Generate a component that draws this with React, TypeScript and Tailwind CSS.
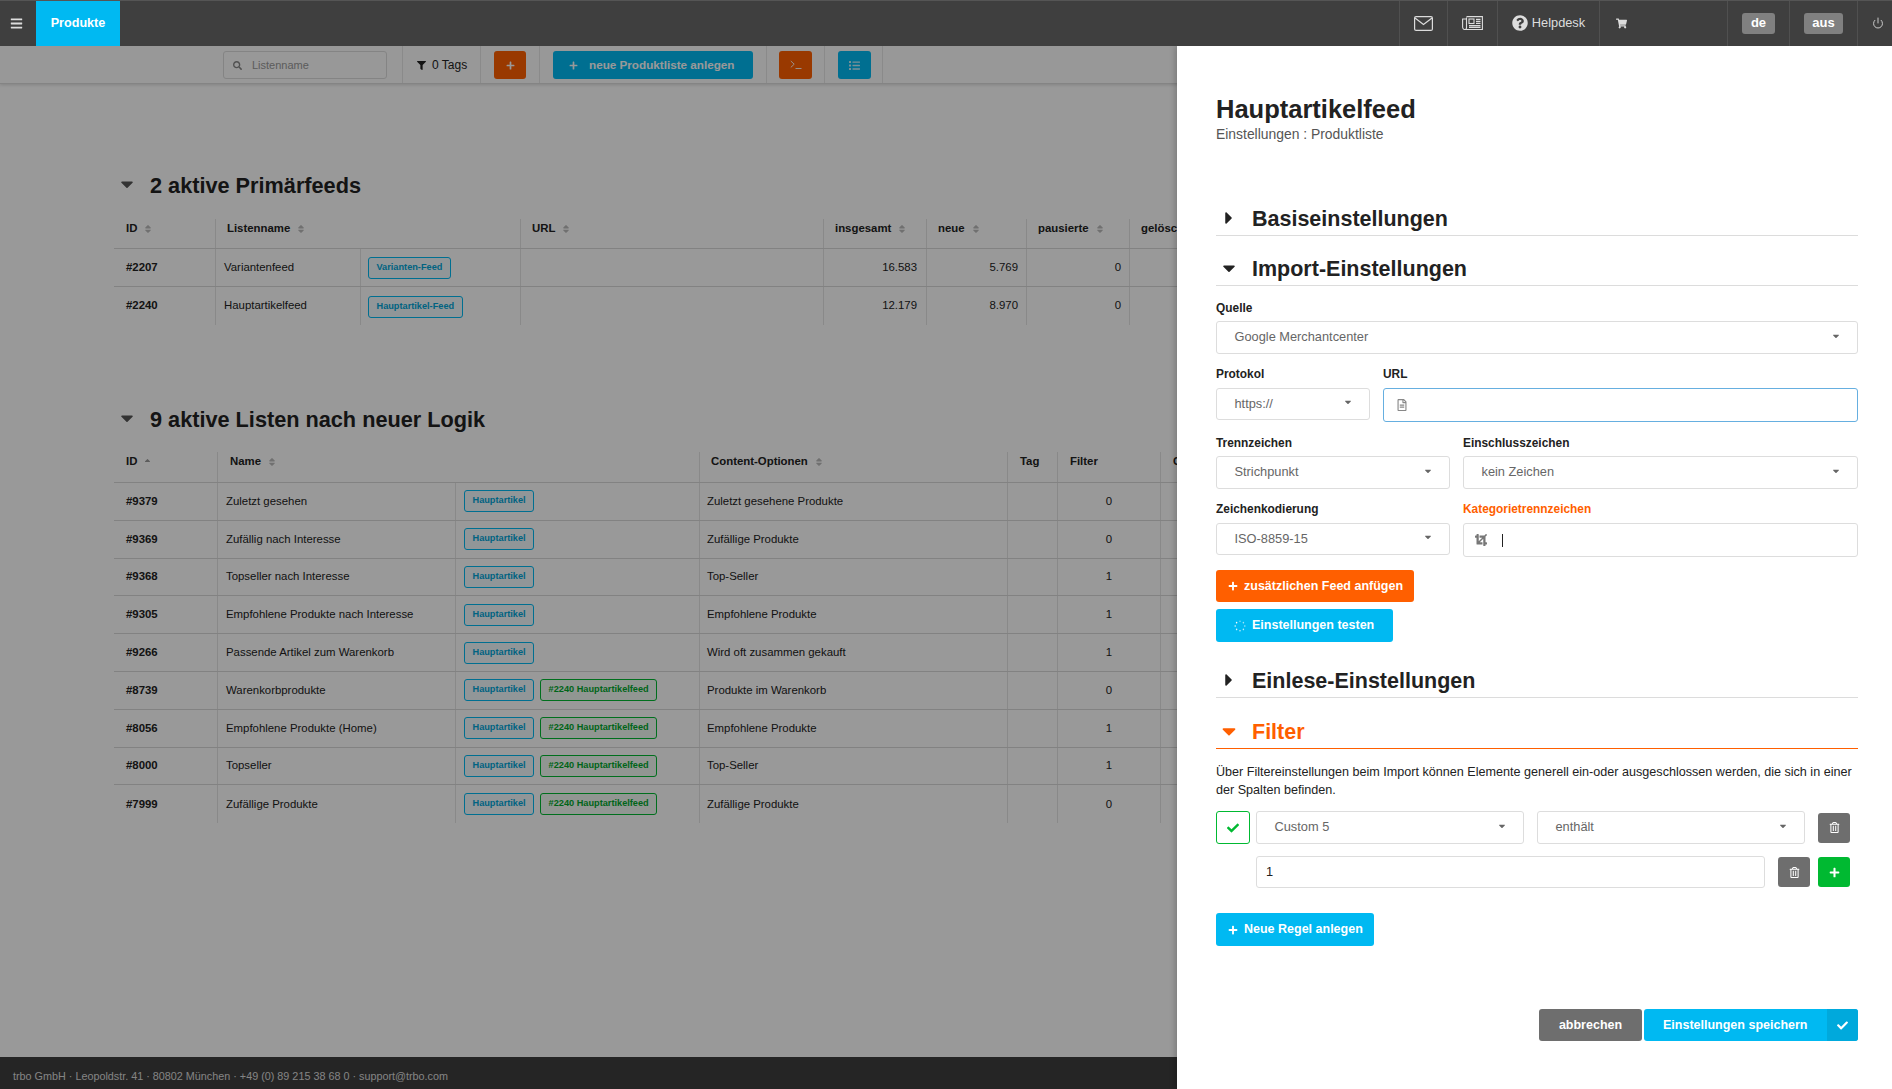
import type { ReactNode } from "react";
import {
  FaBars,
  FaCaretDown,
  FaCaretRight,
  FaCheck,
  FaCrop,
  FaFilter,
  FaList,
  FaPlus,
  FaQuestionCircle,
  FaRegFileAlt,
  FaRegTrashAlt,
  FaSearch,
  FaShoppingCart,
  FaSort,
  FaSortUp,
} from "react-icons/fa";
import { Power } from "lucide-react";

const primaryRows = [
  { id: "#2207", name: "Variantenfeed", badge: "Varianten-Feed", total: "16.583", fresh: "5.769", paused: "0" },
  { id: "#2240", name: "Hauptartikelfeed", badge: "Hauptartikel-Feed", total: "12.179", fresh: "8.970", paused: "0" },
];

const listRows = [
  { id: "#9379", name: "Zuletzt gesehen", feed: false, content: "Zuletzt gesehene Produkte", filter: "0" },
  { id: "#9369", name: "Zufällig nach Interesse", feed: false, content: "Zufällige Produkte", filter: "0" },
  { id: "#9368", name: "Topseller nach Interesse", feed: false, content: "Top-Seller", filter: "1" },
  { id: "#9305", name: "Empfohlene Produkte nach Interesse", feed: false, content: "Empfohlene Produkte", filter: "1" },
  { id: "#9266", name: "Passende Artikel zum Warenkorb", feed: false, content: "Wird oft zusammen gekauft", filter: "1" },
  { id: "#8739", name: "Warenkorbprodukte", feed: true, content: "Produkte im Warenkorb", filter: "0" },
  { id: "#8056", name: "Empfohlene Produkte (Home)", feed: true, content: "Empfohlene Produkte", filter: "1" },
  { id: "#8000", name: "Topseller", feed: true, content: "Top-Seller", filter: "1" },
  { id: "#7999", name: "Zufällige Produkte", feed: true, content: "Zufällige Produkte", filter: "0" },
];

function Badge({ children, green, className = "" }: { children: ReactNode; green?: boolean; className?: string }) {
  return (
    <span
      className={`flex h-[22px] items-center rounded-[3px] border-[1.5px] px-[7.5px] text-[9.2px] font-bold whitespace-nowrap ${
        green ? "border-[#00b931] bg-[#f2fbf4] text-[#00a82c]" : "border-[#00b9f2] bg-[#f2fbfe] text-[#00a5d8]"
      } ${className}`}
    >
      {children}
    </span>
  );
}

function HeadCell({ children, sort = true, up, className = "pl-3" }: { children: ReactNode; sort?: boolean; up?: boolean; className?: string }) {
  return (
    <div className={`flex items-center gap-[6px] border-l border-[#e4e4e4] pb-[10px] text-[11.4px] font-bold text-[#222] first:border-l-0 ${className}`}>
      {children}
      {sort && (up ? <FaSortUp className="text-[9px] text-[#999]" /> : <FaSort className="text-[10px] text-[#bbb]" />)}
    </div>
  );
}

function Cell({ children, className = "" }: { children?: ReactNode; className?: string }) {
  return <div className={`flex items-center border-l border-[#e4e4e4] text-[11.4px] text-[#222] ${className}`}>{children}</div>;
}

function SectionTitle({ children }: { children: ReactNode }) {
  return (
    <h2 className="flex h-[28px] items-center pl-[119px] text-[21.7px] font-bold text-[#222]">
      <FaCaretDown className="mr-[15px] mb-[4px] w-[16px] text-[20px] text-[#555]" />
      {children}
    </h2>
  );
}

function PanelHeading({ children, open, active, className = "" }: { children: ReactNode; open?: boolean; active?: boolean; className?: string }) {
  const Caret = open ? FaCaretDown : FaCaretRight;
  return (
    <div
      className={`flex h-[33px] items-center border-b text-[21.5px] font-bold ${
        active ? "border-[#ff5f00] text-[#ff5f00]" : "border-[#dcdcdc] text-[#222]"
      } ${className}`}
    >
      <span className="flex w-[36px] justify-center pr-[10px] pb-[2px]">
        <Caret className={active ? "text-[22px]" : "text-[20px]"} />
      </span>
      {children}
    </div>
  );
}

function Select({ value, className = "" }: { value: string; className?: string }) {
  return (
    <div className={`flex items-center justify-between rounded-[3px] border border-[#ddd] bg-white pr-[16px] pb-px pl-[17.5px] text-[12.8px] text-[#666] ${className}`}>
      {value}
      <FaCaretDown className="mb-[3px] text-[10px] text-[#666]" />
    </div>
  );
}

function Label({ children, orange }: { children: ReactNode; orange?: boolean }) {
  return <div className={`h-4 text-[11.9px] leading-4 font-bold ${orange ? "text-[#ff5f00]" : "text-[#222]"}`}>{children}</div>;
}

function HeaderCell({ children, className = "" }: { children: ReactNode; className?: string }) {
  return <div className={`flex h-full items-center justify-center border-l border-[#505050] pb-px ${className}`}>{children}</div>;
}

function ToolCell({ children, className = "" }: { children: ReactNode; className?: string }) {
  return <div className={`flex h-full items-center border-l border-[#e6e6e6] pt-px ${className}`}>{children}</div>;
}

function IconBtn({ children, color }: { children: ReactNode; color: string }) {
  return <button className={`flex h-[30px] w-[32px] items-center justify-center rounded-[3px] text-[11px] text-white ${color}`}>{children}</button>;
}

function ActionBtn({ children, color, className = "" }: { children: ReactNode; color: string; className?: string }) {
  return (
    <button className={`flex items-center rounded-[3px] pl-[12px] text-[12.5px] font-bold whitespace-nowrap text-white ${color} ${className}`}>
      {children}
    </button>
  );
}

function Spinner() {
  const dots = [0, 45, 90, 135, 180, 225, 270, 315];
  return (
    <svg viewBox="0 0 16 16" className="mr-[6px] h-[12px] w-[12px]">
      {dots.map((deg, i) => (
        <circle key={deg} cx="8" cy="1.6" r="1" fill="white" opacity={0.55 + i * 0.06} transform={`rotate(${deg} 8 8)`} />
      ))}
    </svg>
  );
}

function MailIcon() {
  return (
    <svg viewBox="0 0 19 15" fill="none" stroke="#dcdcdc" strokeWidth="1.2" className="h-[15px] w-[19px]">
      <rect x="0.6" y="0.6" width="17.8" height="13.8" rx="1.5" />
      <path d="M1 2l8.5 6.5L18 2" />
    </svg>
  );
}

function NewsIcon() {
  return (
    <svg viewBox="0 0 21 14" fill="none" stroke="#dcdcdc" strokeWidth="1.1" className="h-[14px] w-[21px]">
      <path d="M4.5 1.5V12a1.5 1.5 0 0 1-1.5 1.5A2.4 2.4 0 0 1 .6 11V3h3.9" />
      <path d="M4.5 0.6h15.9v12.9H3" />
      <rect x="7" y="3" width="5" height="4.5" />
      <path d="M14 3.4h4.5M14 5.4h4.5M14 7.4h4.5M7 9.6h11.5M7 11.4h11.5" />
    </svg>
  );
}

function TerminalIcon() {
  return (
    <svg viewBox="0 0 12 10" fill="none" stroke="white" strokeWidth="1" className="h-[10px] w-[12px] opacity-90">
      <path d="M0.8 1l3.4 3.2L0.8 7.4M5.5 8.5h6" />
    </svg>
  );
}

function Drawer() {
  return (
    <aside className="absolute top-0 right-0 bottom-0 w-[715px] bg-white pt-[47px] pr-[34px] pl-[39px] shadow-[-2px_0_6px_rgba(0,0,0,0.2)]">
      <h1 className="mb-px text-[25.5px] leading-[32px] font-bold text-[#222]">Hauptartikelfeed</h1>
      <p className="h-4 text-[13.9px] leading-4 text-[#555]">Einstellungen : Produktliste</p>

      <PanelHeading className="mt-[61px]">Basiseinstellungen</PanelHeading>
      <PanelHeading open className="mt-[17px]">Import-Einstellungen</PanelHeading>

      <div className="mt-[14px]">
        <Label>Quelle</Label>
        <Select value="Google Merchantcenter" className="mt-[5px] h-[33px]" />
      </div>

      <div className="mt-[12px] grid grid-cols-[154px_1fr] gap-x-[13px]">
        <div>
          <Label>Protokol</Label>
          <Select value="https://" className="mt-[6px] h-[32px]" />
        </div>
        <div>
          <Label>URL</Label>
          <div className="mt-[6px] flex h-[34px] items-center rounded-[3px] border border-[#66afe0] pl-[12px]">
            <FaRegFileAlt className="text-[12px] text-[#888]" />
          </div>
        </div>
      </div>

      <div className="mt-[13px] grid grid-cols-[234px_1fr] gap-x-[13px]">
        <div>
          <Label>Trennzeichen</Label>
          <Select value="Strichpunkt" className="mt-[5px] h-[33px]" />
        </div>
        <div>
          <Label>Einschlusszeichen</Label>
          <Select value="kein Zeichen" className="mt-[5px] h-[33px]" />
        </div>
      </div>

      <div className="mt-[12px] grid grid-cols-[234px_1fr] gap-x-[13px]">
        <div>
          <Label>Zeichenkodierung</Label>
          <Select value="ISO-8859-15" className="mt-[6px] h-[32px]" />
        </div>
        <div>
          <Label orange>Kategorietrennzeichen</Label>
          <div className="mt-[6px] flex h-[34px] items-center rounded-[3px] border border-[#ddd] pl-[11px]">
            <FaCrop className="text-[12px] text-[#777]" />
            <span className="ml-[15px] h-[13px] w-px bg-[#222]" />
          </div>
        </div>
      </div>

      <ActionBtn color="bg-[#ff5f00]" className="mt-[13px] h-[32px] w-[198px]">
        <FaPlus className="mr-[6px] text-[10px]" />
        zusätzlichen Feed anfügen
      </ActionBtn>
      <ActionBtn color="bg-[#00b9f2]" className="mt-[7px] h-[33px] w-[177px] pl-[18px]">
        <Spinner />
        Einstellungen testen
      </ActionBtn>

      <PanelHeading className="mt-[23px]">Einlese-Einstellungen</PanelHeading>
      <PanelHeading open active className="mt-[18px]">Filter</PanelHeading>

      <p className="mt-[14px] text-[12.6px] leading-[18px] text-[#222]">
        Über Filtereinstellungen beim Import können Elemente generell ein-oder ausgeschlossen werden, die sich in einer der Spalten befinden.
      </p>

      <div className="mt-[12px] flex items-center">
        <div className="flex h-[33px] w-[34px] items-center justify-center rounded-[3px] border border-[#00b931]">
          <FaCheck className="text-[12px] text-[#00b931]" />
        </div>
        <Select value="Custom 5" className="ml-[6px] h-[33px] w-[268px]" />
        <Select value="enthält" className="ml-[13px] h-[33px] w-[268px]" />
        <div className="ml-[13px]">
          <IconBtn color="bg-[#6e6e6e]">
            <FaRegTrashAlt />
          </IconBtn>
        </div>
      </div>

      <div className="mt-[12px] flex items-center pl-[40px]">
        <div className="flex h-[32px] w-[509px] items-center rounded-[3px] border border-[#ddd] pl-[9px] text-[12.8px] text-[#222]">1</div>
        <div className="ml-[13px] flex gap-[8px]">
          <IconBtn color="bg-[#6e6e6e]">
            <FaRegTrashAlt />
          </IconBtn>
          <IconBtn color="bg-[#00b931]">
            <FaPlus className="text-[11px]" />
          </IconBtn>
        </div>
      </div>

      <ActionBtn color="bg-[#00b9f2]" className="mt-[25px] h-[33px] w-[158px]">
        <FaPlus className="mr-[6px] text-[10px]" />
        Neue Regel anlegen
      </ActionBtn>

      <div className="mt-[63px] flex justify-end gap-[2px]">
        <button className="h-[32px] w-[103px] rounded-[3px] bg-[#6e6e6e] text-[12.5px] font-bold text-white">abbrechen</button>
        <button className="flex h-[32px] w-[214px] items-center overflow-hidden rounded-[3px] bg-[#00b9f2] text-[12.5px] font-bold text-white">
          <span className="flex-1 pl-[19px] text-left">Einstellungen speichern</span>
          <span className="flex h-full w-[31px] items-center justify-center bg-[#00a9dc]">
            <FaCheck className="text-[11px]" />
          </span>
        </button>
      </div>
    </aside>
  );
}

export default function App() {
  return (
    <div className="flex h-[1089px] w-[1892px] flex-col overflow-hidden bg-white font-['Liberation_Sans',Arial,sans-serif]">
      <header className="flex h-[46px] shrink-0 items-center border-t border-[#555] bg-[#3f3f3f] text-white">
        <div className="flex h-full w-[36px] items-center justify-center pr-[4px] pb-px text-[#ddd]">
          <FaBars className="text-[13px]" />
        </div>
        <div className="flex h-full w-[84px] items-center justify-center bg-[#00b9f2] pb-px text-[12.6px] font-bold">Produkte</div>
        <div className="flex-1" />
        <HeaderCell className="w-[48px] pr-[1px]">
          <MailIcon />
        </HeaderCell>
        <HeaderCell className="w-[50px] pr-[1px]">
          <NewsIcon />
        </HeaderCell>
        <HeaderCell className="w-[102px] gap-[4px] text-[12.8px] text-[#ddd]">
          <FaQuestionCircle className="text-[16px]" />
          Helpdesk
        </HeaderCell>
        <HeaderCell className="w-[128px] justify-start pl-[16px]">
          <FaShoppingCart className="text-[11px] text-[#ddd]" />
        </HeaderCell>
        <HeaderCell className="w-[62px]">
          <span className="flex h-[21px] w-[33px] items-center justify-center rounded-[3px] bg-[#808080] text-[13px] font-bold">de</span>
        </HeaderCell>
        <HeaderCell className="w-[68px]">
          <span className="flex h-[21px] w-[39px] items-center justify-center rounded-[3px] bg-[#808080] text-[13px] font-bold">aus</span>
        </HeaderCell>
        <HeaderCell className="w-[35px] pl-[5px]">
          <Power size={12} strokeWidth={1.75} className="text-[#ddd]" />
        </HeaderCell>
      </header>

      <div className="relative flex flex-1 flex-col overflow-hidden">
        <div className="flex h-[38px] shrink-0 items-center border-b border-[#ddd] bg-[#fdfdfd] pl-[223px] shadow-[0_1px_3px_rgba(0,0,0,0.15)]">
          <div className="mt-px flex h-[28px] w-[164px] items-center rounded-[3px] border border-[#ddd] pl-[9px] text-[11px] text-[#999]">
            <FaSearch className="mr-[10px] text-[9px] text-[#888]" />
            Listenname
          </div>
          <div className="w-[15px]" />
          <ToolCell className="w-[78px] pl-[14px] text-[12px] text-[#222]">
            <FaFilter className="mr-[6px] text-[9px]" />
            0 Tags
          </ToolCell>
          <ToolCell className="w-[59px] pl-[13px]">
            <button className="flex h-[28px] w-[32px] items-center justify-center rounded-[3px] bg-[#ff5f00] text-white">
              <FaPlus className="text-[9px]" />
            </button>
          </ToolCell>
          <ToolCell className="w-[227px] pl-[13px]">
            <button className="flex h-[28px] w-[200px] items-center rounded-[3px] bg-[#00b9f2] pl-[16px] text-[11.7px] font-bold text-white">
              <FaPlus className="mr-[11px] text-[9px]" />
              neue Produktliste anlegen
            </button>
          </ToolCell>
          <ToolCell className="w-[58px] pl-[12px]">
            <button className="flex h-[28px] w-[33px] items-center justify-center rounded-[3px] bg-[#ff5f00] text-white">
              <TerminalIcon />
            </button>
          </ToolCell>
          <ToolCell className="w-[59px] border-r pl-[13px]">
            <button className="flex h-[28px] w-[33px] items-center justify-center rounded-[3px] bg-[#00b9f2] text-white">
              <FaList className="text-[11px] opacity-80" />
            </button>
          </ToolCell>
        </div>

        <div className="mt-[88px]">
          <SectionTitle>2 aktive Primärfeeds</SectionTitle>
          <div className="mt-[19px] ml-[114px] w-[1200px]">
            <div className="grid h-[30px] grid-cols-[101px_305px_303px_103px_100px_103px_185px] border-b border-[#d9d9d9]">
              <HeadCell>ID</HeadCell>
              <HeadCell className="pl-[11px]">Listenname</HeadCell>
              <HeadCell className="pl-[11px]">URL</HeadCell>
              <HeadCell className="pl-[11px]">insgesamt</HeadCell>
              <HeadCell className="pl-[11px]">neue</HeadCell>
              <HeadCell className="pl-[11px]">pausierte</HeadCell>
              <HeadCell className="pl-[11px]" sort={false}>gelöscht</HeadCell>
            </div>
            {primaryRows.map((row) => (
              <div
                key={row.id}
                className="grid h-[38px] grid-cols-[101px_145px_160px_303px_103px_100px_103px_185px] border-b border-[#d9d9d9] last:border-b-0"
              >
                <Cell className="border-l-0 pl-3 font-bold">{row.id}</Cell>
                <Cell className="pl-[8px]">{row.name}</Cell>
                <Cell className="pl-[7px]">
                  <Badge className="mt-[1px]">{row.badge}</Badge>
                </Cell>
                <Cell />
                <Cell className="justify-end pr-[9px]">{row.total}</Cell>
                <Cell className="justify-end pr-[8px]">{row.fresh}</Cell>
                <Cell className="justify-end pr-[8px]">{row.paused}</Cell>
                <Cell />
              </div>
            ))}
          </div>
        </div>

        <div className="mt-[81px]">
          <SectionTitle>9 aktive Listen nach neuer Logik</SectionTitle>
          <div className="mt-[18px] ml-[114px] w-[1200px]">
            <div className="grid h-[31px] grid-cols-[103px_482px_308px_50px_103px_154px] border-b border-[#d9d9d9]">
              <HeadCell up>ID</HeadCell>
              <HeadCell>Name</HeadCell>
              <HeadCell className="pl-[11px]">Content-Optionen</HeadCell>
              <HeadCell sort={false}>Tag</HeadCell>
              <HeadCell sort={false}>Filter</HeadCell>
              <HeadCell sort={false}>Content</HeadCell>
            </div>
            {listRows.map((row) => (
              <div
                key={row.id}
                className="grid h-[37.8px] grid-cols-[103px_238px_244px_308px_50px_103px_154px] border-b border-[#d9d9d9] last:border-b-0"
              >
                <Cell className="border-l-0 pl-3 font-bold">{row.id}</Cell>
                <Cell className="pl-[8px]">{row.name}</Cell>
                <Cell className="gap-[6px] pl-[8px]">
                  <Badge>Hauptartikel</Badge>
                  {row.feed && <Badge green>#2240 Hauptartikelfeed</Badge>}
                </Cell>
                <Cell className="pl-[7px]">{row.content}</Cell>
                <Cell />
                <Cell className="justify-center">{row.filter}</Cell>
                <Cell />
              </div>
            ))}
          </div>
        </div>

        <footer className="mt-auto flex h-[32px] shrink-0 items-center bg-[#3f3f3f] pt-[6px] pl-[13px] text-[10.8px] text-[#ddd]">
          trbo GmbH · Leopoldstr. 41 · 80802 München · +49 (0) 89 215 38 68 0 · support@trbo.com
        </footer>

        <div className="absolute inset-0 bg-black/40" />
        <Drawer />
      </div>
    </div>
  );
}
